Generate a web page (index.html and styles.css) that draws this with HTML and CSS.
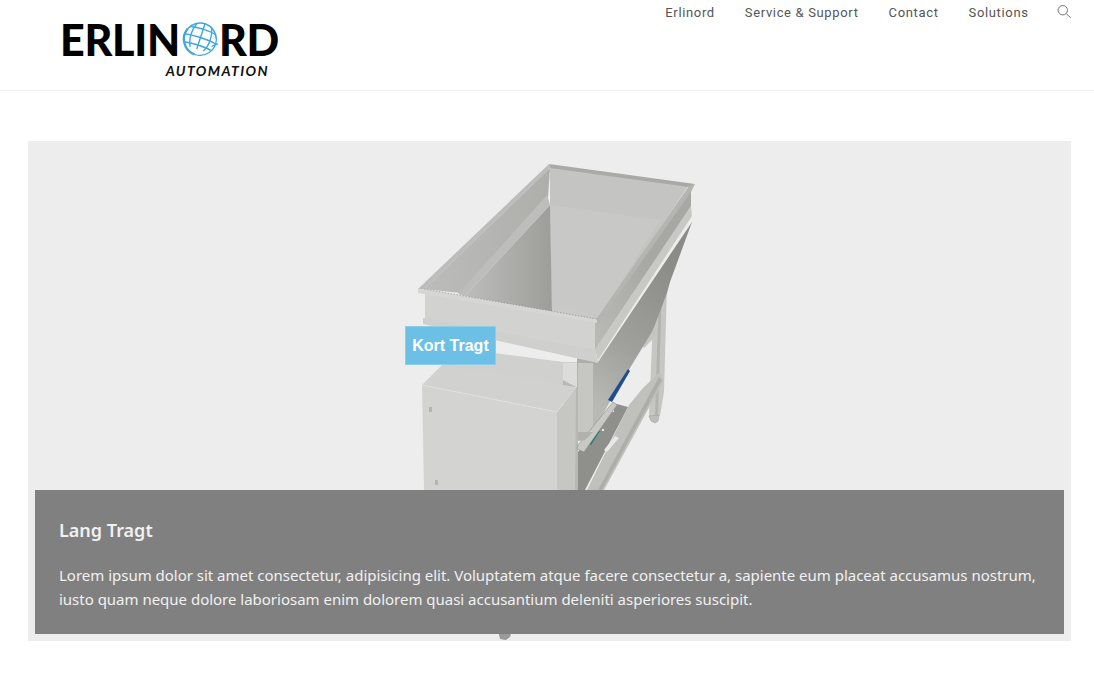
FILE: index.html
```html
<!DOCTYPE html>
<html lang="da">
<head>
<meta charset="utf-8">
<title>Erlinord Automation</title>
<link rel="stylesheet" href="styles.css">
</head>
<body>
<header class="site-header">
  <a class="logo" href="#">
    <span class="logo-word">ERLIN<svg class="globe" viewBox="0 0 36 34" aria-hidden="true">
      <defs><clipPath id="ball"><circle cx="18" cy="17" r="15"/></clipPath></defs>
      <g fill="none" stroke="#3fa6de">
        <path d="M6.500 7A15.500 15.500 0 0 0 13 31.700" stroke-width="2.200"/>
        <path d="M13 31.700A15.500 15.500 0 0 0 33.500 17" stroke-width="1.200"/>
        <path d="M6.500 7A15.500 15.500 0 0 1 33.500 17" stroke-width="1.500"/>
        <g clip-path="url(#ball)" stroke-width="1.300" transform="rotate(18 18 17)">
          <path d="M2 9.500C10 6.500 26 6.500 34 9.500M1 17C10 15 26 15 35 17M3 24.500C11 22.500 25 22.500 33 24.500"/>
          <path d="M18 1V27M11.500 2C7.500 10 7.500 20 11.500 27M24.500 2C28.500 10 28.500 20 24.500 27"/>
        </g>
        <path d="M29 24L35 21.500" stroke-width="1.300"/>
      </g>
    </svg>RD</span>
    <span class="logo-sub">AUTOMATION</span>
  </a>
  <nav class="nav">
    <a href="#">Erlinord</a>
    <a href="#">Service &amp; Support</a>
    <a href="#">Contact</a>
    <a href="#">Solutions</a>
    <svg class="search" viewBox="0 0 14 13" aria-hidden="true"><circle cx="5.800" cy="5.200" r="4.700"/><path d="M9.200 8.600L13.700 12.800"/></svg>
  </nav>
</header>
<main class="main">
  <section class="hero">
    <svg class="model" viewBox="28 141 1043 500" aria-hidden="true">
      <defs>
        <linearGradient id="leftWall" x1="0" y1="0" x2="1" y2="0"><stop offset="0" stop-color="#bcbcba"/><stop offset="1" stop-color="#aeaeab"/></linearGradient>
        <linearGradient id="lowLeft" x1="0" y1="0" x2="1" y2="0"><stop offset="0" stop-color="#bdbdbb"/><stop offset="1" stop-color="#9d9d9a"/></linearGradient>
        <linearGradient id="side" gradientUnits="userSpaceOnUse" x1="590" y1="400" x2="680" y2="270"><stop offset="0" stop-color="#b8b8b5"/><stop offset="0.4" stop-color="#a0a09d"/><stop offset="1" stop-color="#8b8b87"/></linearGradient>
        <linearGradient id="band" gradientUnits="userSpaceOnUse" x1="595" y1="340" x2="660" y2="270"><stop offset="0" stop-color="#b9b9b6"/><stop offset="1" stop-color="#a7a7a4"/></linearGradient>
      </defs>
      <!-- frame behind the hopper -->
      <polygon points="667,285 664,392 660,416 649,417 652,342 654,320" fill="#c6c6c3"/>
      <polygon points="659,290 662,290 658,416 655,416" fill="#b3b3b0"/>
      <polygon points="640,342 654,329 656,336 644,348" fill="#c4c4c1"/>
      <polygon points="649,416 659,415 658,421 655,423 651,421" fill="#bdbdba" stroke="#9a9a97" stroke-width=".5"/>
      <!-- lower rail and plate -->
      <polygon points="613,403 628,407 585,490 577,490 578,452" fill="#8f8f8c"/>
      <polygon points="643,388 660,372 663,382 604,490 587,490 629,405" fill="#c0c0bd"/>
      <polygon points="659,377 662,380 602,490 598,490" fill="#adadaa"/>
      <polygon points="615,436 619,438 607,452 604,450" fill="#e8e8e8"/>
      <rect x="612" y="410" width="2" height="2" fill="#ececec"/>
      <rect x="602" y="429" width="2" height="2" fill="#ececec"/>
      <!-- lower cabinet band and post -->
      <polygon points="433,345 563,362 577,362 577,392 442,366" fill="#d0d0ce"/>
      <polygon points="563,363 577,363 578,400 563,398" fill="#dcdcda"/>
      <!-- hopper side and bottom -->
      <polygon points="577,358 598,362 692,222 670,282 667,293 653,330 630,368 612,398 593,432 577,432" fill="url(#side)"/>
      <polygon points="578,363 593,363 593,432 578,432" fill="#c6c6c3"/>
      <polygon points="563,380 578,388 578,490 575,490 563,420" fill="#b8b8b5"/>
      <polygon points="628,369 630,371 612,402 608,400" fill="#1f4e8c"/>
      <polygon points="595,430 600,431 591,445 587,443" fill="#1c7a72"/>
      <polygon points="613,402 617,405 584,452 577,449 578,445" fill="#c8c8c5" stroke="#8f8f8c" stroke-width=".6"/>
      <polygon points="578,432 593,432 585,440 578,441" fill="#b0b0ad"/>
      <!-- right wall bands -->
      <polygon points="595,350 691,206 692,216 598,360" fill="#c8c8c5"/>
      <polygon points="595,323 691,190 691,206 595,350" fill="url(#band)"/>
      <!-- front wall -->
      <polygon points="425,293 595,322 595,350 598,362 423,323 425,318" fill="#d2d2d0"/>
      <polygon points="423,318 425,318 595,350 598,363 423,324" fill="#cfcfcd"/>
      <!-- interior walls -->
      <polygon points="550,166 689,185 597,321 552,312 550,205" fill="#c4c4c2"/>
      <polygon points="550,205 660,220 597,321 552,312" fill="#c8c8c6"/>
      <polygon points="550,168 548,197 460,293 424,289" fill="url(#leftWall)"/>
      <polygon points="550,205 552,312 465,296" fill="url(#lowLeft)"/>
      <polygon points="547,195 550,205 465,296 458,294" fill="#bdbdbb"/>
      <polygon points="552,305 552,312 597,321 593,314" fill="#c9c9c7"/>
      <!-- rim -->
      <polygon points="549,164 695,184 689,187 550,168" fill="#a9a9a6"/>
      <polygon points="549,164 550,168 424,289 418,289" fill="#bcbcba"/>
      <polygon points="689,186 695,184 691,192 597,325 595,321" fill="#b4b4b1"/>
      <polygon points="418,289 424,289 597,319 597,323 418,293" fill="#d6d6d4"/>
      <polyline points="424,289 597,319" fill="none" stroke="#8e8e8b" stroke-width=".7" stroke-dasharray="1.500 1.500"/>
      <!-- cabinet -->
      <polygon points="422,385 442,365 576,387 557,412" fill="#d1d1cf"/>
      <polygon points="422,385 557,412 557,490 424,490" fill="#d3d3d1"/>
      <polygon points="557,412 576,387 575,490 557,490" fill="#c6c6c3"/>
      <polyline points="422,385 557,412 576,387" fill="none" stroke="#e4e4e2" stroke-dasharray="2 1"/>
      <rect x="429" y="407" width="3" height="5" fill="#b4b4b2"/>
      <rect x="435" y="480" width="3" height="5" fill="#b4b4b2"/>
      <!-- foot under the caption -->
      <polygon points="498,630 512,630 510,637 506,640 500,639" fill="#999997"/>
    </svg>
    <span class="badge">Kort Tragt</span>
    <div class="caption">
      <h2 class="caption-title">Lang Tragt</h2>
      <p class="caption-text">Lorem ipsum dolor sit amet consectetur, adipisicing elit. Voluptatem atque facere consectetur a, sapiente eum placeat accusamus nostrum, iusto quam neque dolore laboriosam enim dolorem quasi accusantium deleniti asperiores suscipit.</p>
    </div>
  </section>
</main>
</body>
</html>
```
FILE: styles.css
```css
* { box-sizing: border-box; }
html, body { margin: 0; height: 675px; overflow: hidden; background: #fff; }
body { font-family: "Noto Sans", "Open Sans", sans-serif; }
a { text-decoration: none; color: inherit; }

.site-header {
  display: flex;
  justify-content: space-between;
  align-items: flex-start;
  height: 91px;
  padding: 0 23px 0 59px;
  border-bottom: 1px solid #f1f1f1;
}
.logo {
  display: flex;
  flex-direction: column;
  align-items: flex-end;
  width: 220px;
  margin-top: 19px;
  color: #000;
  font-family: Lato, sans-serif;
}
.logo-word {
  display: flex;
  align-items: center;
  height: 42px;
  font-size: 43px;
  font-weight: 900;
  line-height: 42px;
  white-space: nowrap;
  letter-spacing: -0.3px;
}
.globe { width: 38px; height: 36px; margin: 0 0 3px 1px; }
.logo-sub {
  margin: 3px 10px 0 0;
  font-size: 14px;
  line-height: 14px;
  font-weight: 700;
  font-style: italic;
  letter-spacing: 1.4px;
  color: #111;
}

.nav {
  display: flex;
  align-items: center;
  gap: 30px;
  height: 24px;
  font-family: Roboto, sans-serif;
  font-size: 13px;
  letter-spacing: 0.65px;
  color: #555;
}
.search { width: 14px; height: 13px; margin: -2px 0 0 -1.6px; fill: none; stroke: #777; stroke-width: 1; }

.main { padding: 50px 23px 0 28px; }
.hero { position: relative; height: 500px; background: #ededed; overflow: hidden; }
.model { display: block; width: 100%; height: 100%; }
.badge {
  position: absolute;
  left: 377px;
  top: 185px;
  width: 91px;
  height: 39px;
  background: #6cc0e6;
  border: 1px solid #8ccdea;
  color: #fff;
  font: 700 16px/37px "Liberation Sans", sans-serif;
  text-align: center;
}
.caption {
  position: absolute;
  left: 7px;
  right: 7px;
  bottom: 7px;
  height: 144px;
  padding: 28px 24px 0;
  background: #808080;
  color: #f1f1f1;
}
.caption-title { margin: 0 0 21px; font-size: 18px; line-height: 24px; font-weight: 600; }
.caption-text { margin: 0; font-size: 15px; line-height: 24px; letter-spacing: -0.013px; }
```
